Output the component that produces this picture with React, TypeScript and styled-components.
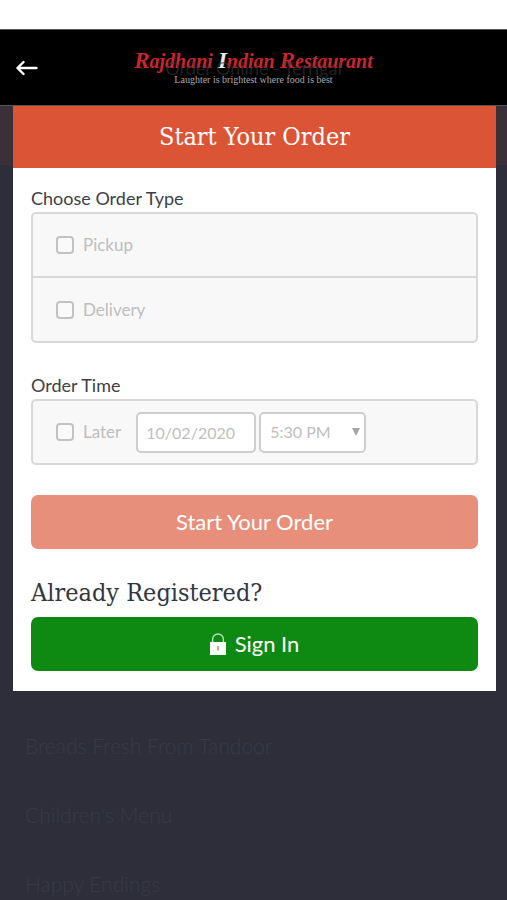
import React from "react";
import styled, { createGlobalStyle } from "styled-components";

const GlobalStyle = createGlobalStyle`
  *, *::before, *::after { box-sizing: border-box; }
  body {
    margin: 0;
    background: #2d2e3a;
    color: #3d3f47;
    font-family: Lato, sans-serif;
    font-size: 18px;
    line-height: 24px;
  }
`;

const slab = `"DejaVu Serif Condensed", "DejaVu Serif", serif`;

const StatusBar = styled.div`
  height: 29px;
  background: #fff;
`;

const Header = styled.header`
  display: grid;
  grid-template-columns: 53px 1fr 53px;
  align-items: center;
  height: 77px;
  background: #000;
  border-top: 1px solid #555;
  border-bottom: 1px solid #555;
`;

const BackButton = styled.button`
  display: flex;
  justify-content: center;
  padding: 0;
  border: 0;
  background: none;
  color: #fff;
`;

const Brand = styled.div`
  position: relative;
  display: flex;
  flex-direction: column;
  align-items: center;
  white-space: nowrap;
`;

const BrandName = styled.span`
  color: #c9252e;
  font: italic bold 20px/24px "Liberation Serif", serif;
`;

const Capital = styled.span<{ $light?: boolean }>`
  color: ${({ $light }) => ($light ? "#e8e8e8" : "inherit")};
  font-size: 23px;
`;

const Tagline = styled.span`
  color: #a8a8a8;
  font: 10px/14px "Liberation Serif", serif;
`;

const PageTitle = styled.span`
  position: absolute;
  inset: 9px 0 auto;
  color: rgba(56, 56, 56, 0.6);
  font-size: 18px;
  line-height: 20px;
  text-align: center;
`;

const Main = styled.main`
  padding: 0 11px 0 13px;
  background: linear-gradient(#3b3037 59px, #2d2e3a 59px);
`;

const Dialog = styled.section`
  background: #fff;
`;

const DialogTitle = styled.h1`
  margin: 0;
  padding: 15px 18px;
  background: #db5435;
  color: #fff;
  font: 25px/32px ${slab};
  text-align: center;
`;

const Form = styled.form`
  display: flex;
  flex-direction: column;
  padding: 18px 18px 20px;
`;

const Group = styled.fieldset`
  min-width: 0;
  margin: 0 0 30px;
  padding: 0;
  border: 0;
`;

const Legend = styled.legend`
  padding: 0 0 2px;
`;

const Options = styled.div`
  border: 2px solid #d8d8d8;
  border-radius: 5px;
  background: #f8f8f8;
`;

const OptionRow = styled.div`
  display: flex;
  align-items: center;
  min-height: 62px;
  padding: 0 12px 0 23px;

  & + & {
    min-height: 65px;
    border-top: 2px solid #d8d8d8;
  }
`;

const CheckLabel = styled.label`
  display: flex;
  align-items: center;
  gap: 9px;
  color: #bebebe;
  font-size: 17px;
`;

const Checkbox = styled.input`
  appearance: none;
  width: 18px;
  height: 18px;
  margin: 0;
  border: 2px solid #c2c2c2;
  border-radius: 4px;
  background: #fafafa;

  &:checked {
    background: #db5435;
  }
`;

const fieldStyle = `
  height: 41px;
  border: 2px solid #cecece;
  border-radius: 5px;
  background: #fff;
  color: #bebebe;
  font: 16px/24px Lato, sans-serif;
`;

const DateField = styled.input`
  ${fieldStyle}
  width: 120px;
  min-width: 0;
  margin: 0 3px 0 15px;
  padding: 0 8px;
`;

const SelectWrap = styled.div`
  position: relative;
  width: 107px;

  svg {
    position: absolute;
    top: 16px;
    right: 6px;
    pointer-events: none;
  }
`;

const TimeSelect = styled.select`
  ${fieldStyle}
  appearance: none;
  width: 100%;
  padding: 0 20px 0 9px;
`;

const ActionButton = styled.button<{ $tone: string }>`
  display: flex;
  align-items: center;
  justify-content: center;
  gap: 9px;
  width: 100%;
  height: 54px;
  border: 0;
  border-radius: 7px;
  background: ${({ $tone }) => $tone};
  color: #fff;
  font: 22px/28px Lato, sans-serif;
`;

const Registered = styled.h2`
  margin: 28px 0 8px;
  color: #34363f;
  font: 25px/32px ${slab};
`;

const MenuList = styled.nav`
  display: flex;
  flex-direction: column;
  align-items: flex-start;
  gap: 41px;
  padding: 41px 25px 0;
`;

const MenuLink = styled.a`
  color: #393a46;
  font-size: 21px;
  font-weight: 300;
  line-height: 28px;
  text-decoration: none;
`;

const BackArrow = () => (
  <svg width="22" height="16" viewBox="0 0 22 16" fill="none" stroke="currentColor" strokeWidth="2.4" strokeLinecap="round" strokeLinejoin="round" aria-hidden="true">
    <path d="M20.5 8H1.500M7.500 2L1.500 8l6 6" />
  </svg>
);

const LockIcon = () => (
  <svg width="16" height="22" viewBox="0 0 16 22" aria-hidden="true">
    <path d="M2.6 9V6.4a5.4 5.4 0 0 1 10.8 0V9" fill="none" stroke="#b9e0ba" strokeWidth="1.4" />
    <path d="M0 9h16v13H0z" fill="#fff" />
    <path d="M7 13h2v4.500H7z" fill="#8dc78f" />
  </svg>
);

const orderTypes = ["Pickup", "Delivery"];
const categories = ["Breads Fresh From Tandoor", "Children's Menu", "Happy Endings"];

export default function App() {
  return (
    <>
      <GlobalStyle />
      <StatusBar />
      <Header>
        <BackButton type="button" aria-label="Back">
          <BackArrow />
        </BackButton>
        <Brand>
          <BrandName>
            <Capital>R</Capital>ajdhani <Capital $light>I</Capital>ndian <Capital>R</Capital>estaurant
          </BrandName>
          <Tagline>Laughter is brightest where food is best</Tagline>
          <PageTitle>Order Online - Terrigal</PageTitle>
        </Brand>
      </Header>
      <Main>
        <Dialog aria-labelledby="dialog-title">
          <DialogTitle id="dialog-title">Start Your Order</DialogTitle>
          <Form onSubmit={(event) => event.preventDefault()}>
            <Group>
              <Legend>Choose Order Type</Legend>
              <Options>
                {orderTypes.map((type) => (
                  <OptionRow key={type}>
                    <CheckLabel>
                      <Checkbox type="checkbox" name={type} />
                      {type}
                    </CheckLabel>
                  </OptionRow>
                ))}
              </Options>
            </Group>
            <Group>
              <Legend>Order Time</Legend>
              <Options>
                <OptionRow>
                  <CheckLabel>
                    <Checkbox type="checkbox" name="later" />
                    Later
                  </CheckLabel>
                  <DateField type="text" aria-label="Order date" defaultValue="10/02/2020" />
                  <SelectWrap>
                    <TimeSelect aria-label="Order time" defaultValue="5:30 PM">
                      <option>5:30 PM</option>
                      <option>6:00 PM</option>
                    </TimeSelect>
                    <svg width="8" height="8" viewBox="0 0 8 8" aria-hidden="true">
                      <path d="M0 0h8L4 8z" fill="#a6a6a6" />
                    </svg>
                  </SelectWrap>
                </OptionRow>
              </Options>
            </Group>
            <ActionButton type="submit" $tone="#e78f7a">
              Start Your Order
            </ActionButton>
            <Registered>Already Registered?</Registered>
            <ActionButton type="button" $tone="#0e8a12">
              <LockIcon />
              Sign In
            </ActionButton>
          </Form>
        </Dialog>
      </Main>
      <MenuList aria-label="Menu categories">
        {categories.map((name) => (
          <MenuLink key={name} href="#">
            {name}
          </MenuLink>
        ))}
      </MenuList>
    </>
  );
}
